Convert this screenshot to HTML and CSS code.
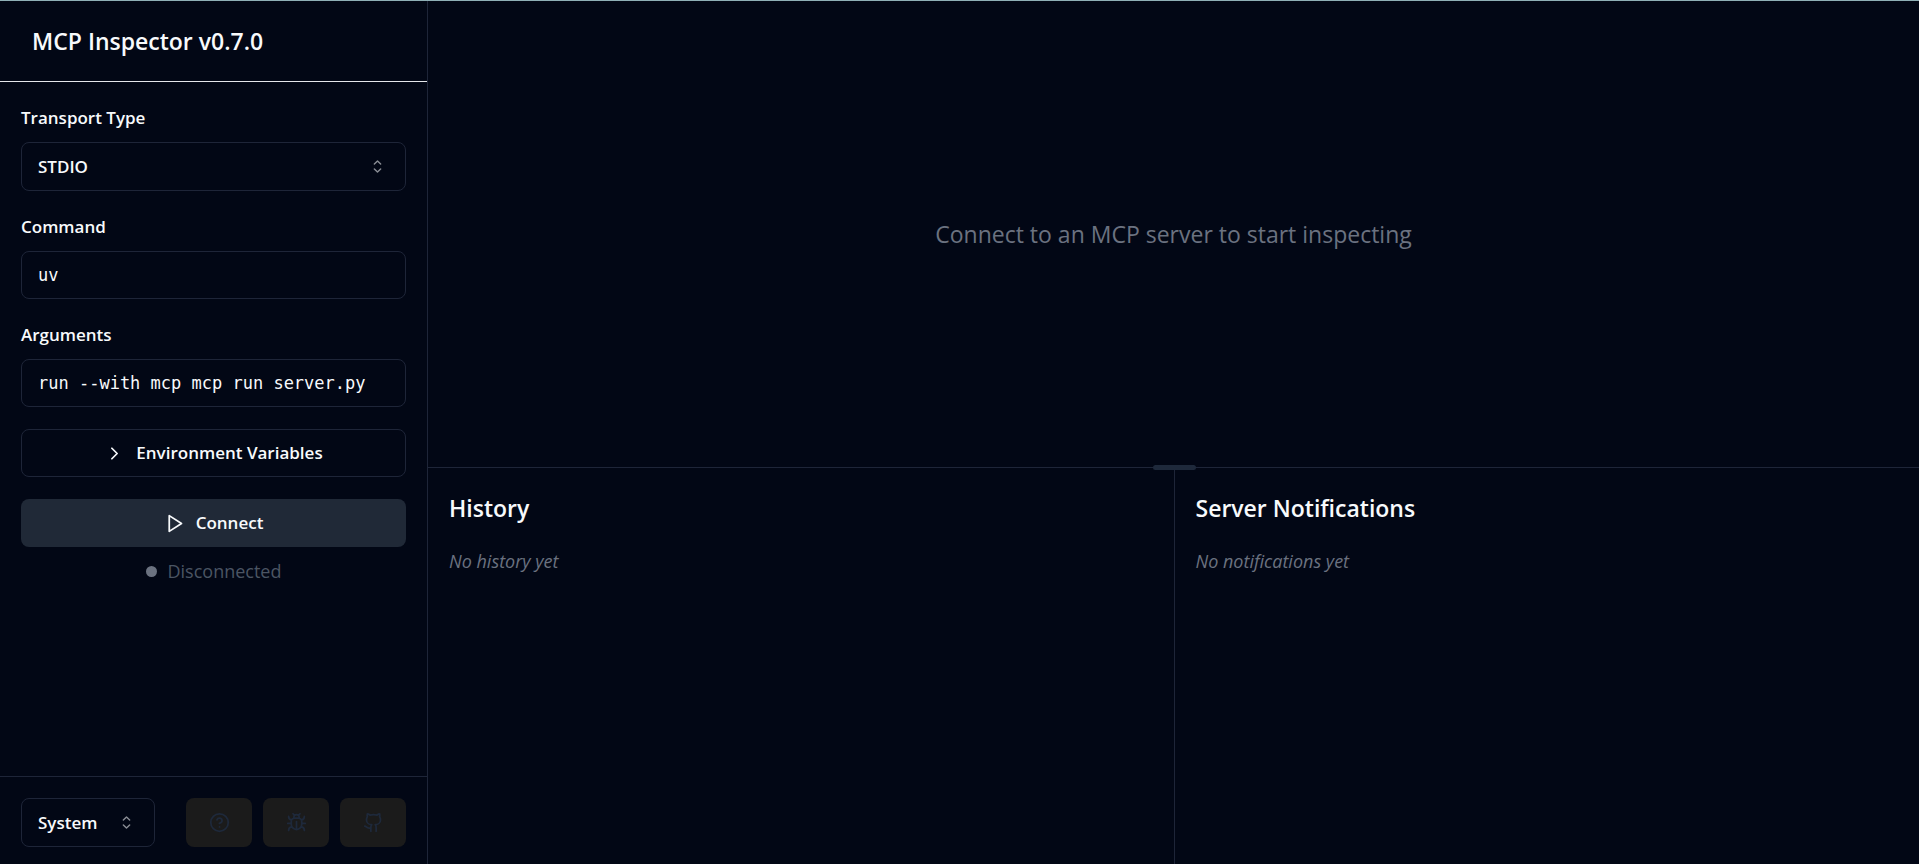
FILE: index.html
```
<!DOCTYPE html>
<html lang="en">
<head>
<meta charset="utf-8">
<title>MCP Inspector</title>
<link rel="stylesheet" href="styles.css">
</head>
<body>
<svg class="sprite" aria-hidden="true">
  <symbol id="sort" viewBox="0 0 15 15"><path d="M5.25 5.75 7.5 3.5l2.25 2.25M5.25 9.25 7.5 11.5l2.25-2.25" stroke-width="1"/></symbol>
</svg>
<div class="app">
  <aside class="sidebar">
    <header class="sidebar-header"><h1 class="title">MCP Inspector v0.7.0</h1></header>
    <div class="sidebar-body">
      <div class="field">
        <label class="label" for="transport">Transport Type</label>
        <div class="select-wrap">
          <select class="select" id="transport"><option>STDIO</option><option>SSE</option></select>
          <svg class="icon caret"><use href="#sort"/></svg>
        </div>
      </div>
      <div class="field">
        <label class="label" for="command">Command</label>
        <input class="input" id="command" type="text" value="uv" spellcheck="false">
      </div>
      <div class="field">
        <label class="label" for="args">Arguments</label>
        <input class="input" id="args" type="text" value="run --with mcp mcp run server.py" spellcheck="false">
      </div>
      <button class="button outline" type="button">
        <svg class="icon" viewBox="0 0 24 24"><path d="m9 18 6-6-6-6"/></svg>
        Environment Variables
      </button>
      <div class="connection">
        <button class="button solid" type="button">
          <svg class="icon" viewBox="0 0 24 24"><path d="M6 3l14 9-14 9z"/></svg>
          Connect
        </button>
        <div class="status"><span class="dot"></span>Disconnected</div>
      </div>
    </div>
    <footer class="sidebar-footer">
      <div class="select-wrap theme">
        <select class="select" aria-label="Theme"><option>System</option><option>Light</option><option>Dark</option></select>
        <svg class="icon caret"><use href="#sort"/></svg>
      </div>
      <div class="links">
        <button class="icon-button" type="button" aria-label="Documentation">
          <svg class="icon" viewBox="0 0 24 24"><circle cx="12" cy="12" r="10"/><path d="M9.09 9a3 3 0 0 1 5.83 1c0 2-3 3-3 3M12 17h.01"/></svg>
        </button>
        <button class="icon-button" type="button" aria-label="Report a bug">
          <svg class="icon" viewBox="0 0 24 24"><path d="m8 2 1.88 1.88M14.12 3.88 16 2M9 7.13v-1a3.003 3.003 0 1 1 6 0v1M12 20c-3.3 0-6-2.7-6-6v-3a4 4 0 0 1 4-4h4a4 4 0 0 1 4 4v3c0 3.3-2.7 6-6 6M12 20v-9M6.53 9C4.6 8.8 3 7.1 3 5M6 13H2M3 21c0-2.1 1.7-3.9 3.8-4M20.97 5c0 2.1-1.6 3.8-3.5 4M22 13h-4M17.2 17c2.1.1 3.8 1.9 3.8 4"/></svg>
        </button>
        <button class="icon-button" type="button" aria-label="GitHub">
          <svg class="icon" viewBox="0 0 24 24"><path d="M15 22v-4a4.8 4.8 0 0 0-1-3.500c3 0 6-2 6-5.500.08-1.250-.27-2.480-1-3.500.28-1.150.28-2.350 0-3.500 0 0-1 0-3 1.500-2.640-.5-5.360-.5-8 0C6 2 5 2 5 2c-.3 1.150-.3 2.350 0 3.500A5.403 5.403 0 0 0 4 9c0 3.500 3 5.500 6 5.500-.39.490-.68 1.050-.85 1.650S8.930 17.380 9 18v4M9 18c-4.510 2-5-2-7-2"/></svg>
        </button>
      </div>
    </footer>
  </aside>
  <main class="main">
    <section class="stage"><p class="hint">Connect to an MCP server to start inspecting</p></section>
    <div class="panels">
      <span class="handle"></span>
      <section class="panel">
        <h2 class="title">History</h2>
        <p class="empty">No history yet</p>
      </section>
      <section class="panel">
        <h2 class="title">Server Notifications</h2>
        <p class="empty">No notifications yet</p>
      </section>
    </div>
  </main>
</div>
</body>
</html>
```
FILE: styles.css
```
:root {
  --bg: #020715;
  --line: #1e2538;
  --text: #f8fafc;
  --muted: #6b7280;
}

* { box-sizing: border-box; }

body {
  margin: 0;
  background: var(--bg);
  color: var(--text);
  font-family: "Open Sans", "Noto Sans", sans-serif;
  font-size: 18px;
  line-height: 28px;
}

h1, h2, p { margin: 0; }

button, select, input { font: inherit; color: inherit; margin: 0; }

.sprite { position: absolute; width: 0; height: 0; }

.app {
  display: flex;
  height: 100vh;
  border-top: 1px solid #8fb0b6;
}

.sidebar {
  display: flex;
  flex-direction: column;
  flex: none;
  width: 428px;
  border-right: 1px solid var(--line);
}

.sidebar-header {
  padding: 22px 32px 21px;
  border-bottom: 1px solid #e5e7eb;
}

.title {
  font-size: 23px;
  font-weight: 600;
  line-height: 37px;
}

.sidebar-body {
  display: flex;
  flex-direction: column;
  flex: 1;
  gap: 22px;
  padding: 22px 21px;
  overflow: auto;
}

.field { display: flex; flex-direction: column; gap: 10px; }

.label { font-size: 17px; font-weight: 600; }

.select-wrap { display: grid; align-items: center; }

.select-wrap > * { grid-area: 1 / 1; }

.select {
  appearance: none;
  width: 100%;
  height: 49px;
  padding: 0 16px;
  border: 1px solid var(--line);
  border-radius: 8px;
  background: transparent;
  font-size: 17px;
  font-weight: 600;
}

.icon {
  flex: none;
  width: 21px;
  height: 21px;
  fill: none;
  stroke: currentColor;
  stroke-width: 2;
  stroke-linecap: round;
  stroke-linejoin: round;
}

.caret { justify-self: end; margin-right: 18px; opacity: .55; pointer-events: none; }

.input {
  width: 100%;
  height: 48px;
  padding: 0 16px;
  border: 1px solid var(--line);
  border-radius: 8px;
  background: transparent;
  font-family: "DejaVu Sans Mono", monospace;
  font-size: 17px;
}

.button {
  display: flex;
  align-items: center;
  justify-content: center;
  gap: 11px;
  width: 100%;
  height: 48px;
  flex: none;
  border: 0;
  border-radius: 8px;
  background: transparent;
  font-size: 17px;
  font-weight: 600;
}

.outline { border: 1px solid var(--line); }

.solid { background: #202937; }

.connection { display: flex; flex-direction: column; gap: 10px; }

.status {
  display: flex;
  align-items: center;
  justify-content: center;
  gap: 11px;
  color: #4b5563;
}

.dot { width: 11px; height: 11px; border-radius: 50%; background: var(--muted); }

.sidebar-footer {
  display: flex;
  justify-content: space-between;
  padding: 21px 21px 17px;
  border-top: 1px solid var(--line);
}

.theme { width: 134px; }

.links { display: flex; gap: 11px; }

.icon-button {
  display: grid;
  place-items: center;
  width: 66px;
  height: 49px;
  padding: 0;
  border: 0;
  border-radius: 8px;
  background: #1b1b1b;
  color: #1e293b;
}

.main { display: flex; flex-direction: column; flex: 1; min-width: 0; }

.stage { display: grid; place-items: center; flex: 1; }

.hint { color: var(--muted); font-size: 23px; line-height: 37px; }

.panels {
  position: relative;
  display: grid;
  grid-template-columns: 1fr 1fr;
  height: 46%;
  border-top: 1px solid var(--line);
}

.handle {
  position: absolute;
  top: -3px;
  left: 50%;
  width: 43px;
  height: 5px;
  margin-left: -21px;
  border-radius: 3px;
  background: #1e293b;
}

.panel { padding: 22px 21px; }

.panel + .panel { border-left: 1px solid var(--line); }

.panel .title { margin-bottom: 20px; }

.empty { color: var(--muted); font-style: italic; }
```
